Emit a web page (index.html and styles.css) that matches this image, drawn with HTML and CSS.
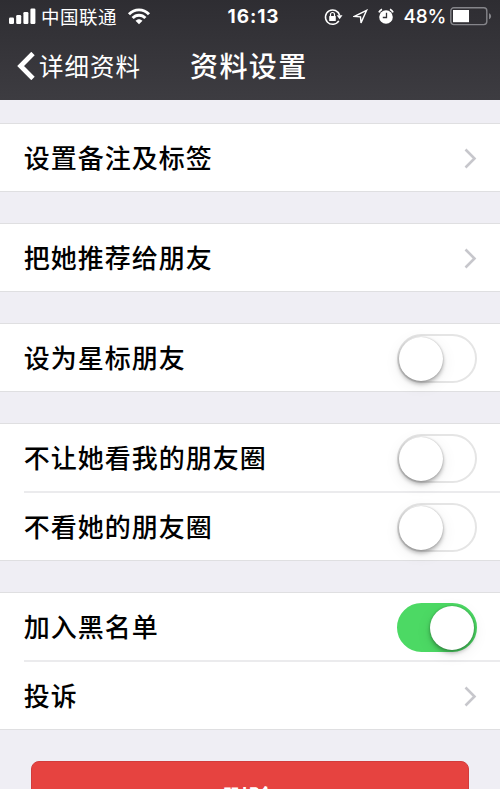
FILE: index.html
```html
<!DOCTYPE html>
<html lang="zh-CN">
<head>
<meta charset="utf-8">
<title>资料设置</title>
<link rel="stylesheet" href="styles.css">
</head>
<body>
<div class="screen">
  <header class="header">
    <div class="status">
      <div class="status-left">
        <svg class="signal" width="27" height="17" viewBox="0 0 27 17" fill="#fff"><rect x="0" y="9.5" width="5" height="6.5" rx="1.2"/><rect x="7.2" y="7" width="5" height="9" rx="1.2"/><rect x="14.4" y="4" width="5" height="12" rx="1.2"/><rect x="21.4" y="0.5" width="5" height="15.5" rx="1.2"/></svg>
        <span class="carrier">中国联通</span>
        <svg class="wifi" width="24" height="17" viewBox="0 0 24 17" fill="none" stroke="#fff" stroke-width="2.9"><path d="M2 6.3C7.6.4 16.4.4 22 6.3"/><path d="M5.6 10.1c3.6-3.9 9.2-3.9 12.8 0"/><path d="M8.5 12.7C10.5 10.6 13.5 10.6 15.5 12.7L12 16.2Z" fill="#fff" stroke="none"/></svg>
      </div>
      <span class="time">16:13</span>
      <div class="status-right">
        <svg class="lock" width="19" height="18" viewBox="0 0 19 18"><path d="M14.8 12.9A7.2 7.2 0 1 1 15.6 7.2" fill="none" stroke="#fff" stroke-width="1.5"/><path d="M12.7 7.3h5.8l-2.9 4z" fill="#fff"/><rect x="5.2" y="8" width="6.6" height="5" rx=".6" fill="#fff"/><path d="M6.5 8.5V6.5a2 2 0 0 1 4 0v2" fill="none" stroke="#fff" stroke-width="1.2"/></svg>
        <svg class="locate" width="15" height="15" viewBox="0 0 15 15" fill="none" stroke="#fff" stroke-width="1.4"><path d="M13.6 1.3 1.5 7.4l6 .5.5 6z"/></svg>
        <svg class="alarm" width="16" height="17" viewBox="0 0 16 17"><circle cx="8" cy="9" r="6.8" fill="#fff"/><path d="M.9 4.3A7 7 0 0 1 4 1.2M15.1 4.3A7 7 0 0 0 12 1.2" fill="none" stroke="#fff" stroke-width="1.7"/><path d="M8.5 4.8V9.5H4.8" fill="none" stroke="#303035" stroke-width="1.3"/></svg>
        <span class="percent">48%</span>
        <svg class="battery" width="42" height="19" viewBox="0 0 42 19"><rect x=".8" y=".8" width="36" height="16.8" rx="3" fill="none" stroke="#85858a" stroke-width="1.4"/><rect x="3" y="3" width="16" height="12.2" fill="#fff"/><path d="M39 6.2c2.8 1 2.8 5 0 6z" fill="#85858a"/></svg>
      </div>
    </div>
    <nav class="nav">
      <a class="back"><svg width="18" height="28" viewBox="0 0 18 28" fill="none" stroke="#fff" stroke-width="4.8"><path d="M16 1.5 3.6 14 16 26.5"/></svg><span>详细资料</span></a>
      <h1 class="title">资料设置</h1>
    </nav>
  </header>
  <main class="groups">
    <section class="group">
      <div class="row"><span class="label">设置备注及标签</span><svg class="chevron" viewBox="0 0 13 21"><path d="M1.5 1.5 10.5 10.5 1.5 19.5"/></svg></div>
    </section>
    <section class="group">
      <div class="row"><span class="label">把她推荐给朋友</span><svg class="chevron" viewBox="0 0 13 21"><path d="M1.5 1.5 10.5 10.5 1.5 19.5"/></svg></div>
    </section>
    <section class="group">
      <div class="row"><span class="label">设为星标朋友</span><i class="switch"><b class="knob"></b></i></div>
    </section>
    <section class="group">
      <div class="row"><span class="label">不让她看我的朋友圈</span><i class="switch"><b class="knob"></b></i></div>
      <div class="row"><span class="label">不看她的朋友圈</span><i class="switch"><b class="knob"></b></i></div>
    </section>
    <section class="group">
      <div class="row"><span class="label">加入黑名单</span><i class="switch on"><b class="knob"></b></i></div>
      <div class="row"><span class="label">投诉</span><svg class="chevron" viewBox="0 0 13 21"><path d="M1.5 1.5 10.5 10.5 1.5 19.5"/></svg></div>
    </section>
    <button class="delete">删除</button>
  </main>
</div>
</body>
</html>
```
FILE: styles.css
```css
* { box-sizing: border-box; }
body { margin: 0; font-family: "Noto Sans CJK SC", sans-serif; }
svg { display: block; flex: none; }
.screen { width: 500px; height: 789px; overflow: hidden; background: #efeef4; }
.header { height: 100px; background: linear-gradient(#2e2d32, #3d3c41); color: #fff; }
.status { height: 32px; display: grid; grid-template-columns: 1fr auto 1fr; align-items: center; padding: 0 8px 0 9px; }
.status-left, .status-right { display: flex; align-items: center; }
.status-right { justify-content: flex-end; }
.carrier { margin-left: 5px; font-size: 18.5px; letter-spacing: .5px; line-height: 30px; padding-bottom: 1px; }
.wifi { margin-left: 10px; }
.time { font: 700 19px/32px Inter, sans-serif; letter-spacing: .9px; padding-left: 6px; padding-top: 1px; }
.locate { margin-left: 10px; }
.alarm { margin-left: 10px; }
.percent { font: 500 19px/32px Inter, sans-serif; margin-left: 10px; padding-top: 1px; letter-spacing: -.3px; }
.battery { margin-left: 4px; }
.nav { height: 68px; display: grid; grid-template-columns: 190px auto 1fr; align-items: center; }
.back { display: flex; align-items: center; padding-left: 17px; font-size: 24.5px; letter-spacing: 1px; line-height: 68px; gap: 4px; }
.title { margin: 0; font-size: 28px; font-weight: 500; letter-spacing: 1.4px; line-height: 64px; padding-bottom: 2px; }
.groups { padding-top: 23px; display: flex; flex-direction: column; gap: 31px; }
.group { background: #fff; border-top: 1px solid #dfdfe1; border-bottom: 1px solid #dfdfe1; }
.row { display: flex; align-items: center; justify-content: space-between; height: 67px; margin-left: 24px; padding: 2px 23px 0 0; font-size: 26px; font-weight: 500; letter-spacing: 1px; color: #000; }
.row + .row { height: 69px; border-top: 2px solid #ebebed; }
.label { padding-bottom: 3px; line-height: 40px; margin-left: -.2px; }
.chevron { width: 13px; height: 21px; fill: none; stroke: #c7c7cc; stroke-width: 2.6; }
.switch { display: flex; width: 80px; height: 49px; border: 2px solid #e5e5e5; border-radius: 25px; align-items: center; background: #fff; }
.knob { width: 44px; height: 44px; border-radius: 50%; background: #fff; box-shadow: 0 3px 4px rgba(0,0,0,.28), 0 0 2px rgba(0,0,0,.25), 0 4px 16px rgba(0,0,0,.08); }
.switch.on { background: #4cd964; border-color: #4cd964; justify-content: flex-end; padding-right: 1px; }
.delete { align-self: center; display: flex; justify-content: center; align-items: flex-start; width: 438px; height: 75px; border: 1px solid #d23c3c; border-radius: 8px; background: #e64340; color: #fff; font: 700 25.5px/37px "Noto Sans CJK SC", sans-serif; letter-spacing: 1px; padding: 16px 3px 0 0; }
```
